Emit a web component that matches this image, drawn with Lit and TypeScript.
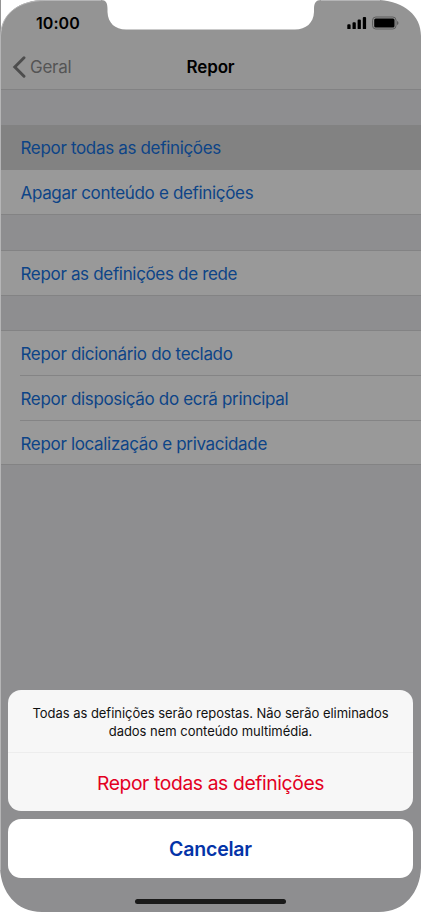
import { LitElement, html, svg, css } from "lit";
import { customElement } from "lit/decorators.js";

@customElement("app-root")
export class AppRoot extends LitElement {
  static styles = css`
    :host {
      display: block;
      font-family: Inter, "Liberation Sans", sans-serif;
      color: #000;
    }
    * { box-sizing: border-box; }
    .screen {
      position: relative;
      width: 421px;
      height: 912px;
      overflow: hidden;
      background: #8e8e90;
      display: flex;
      flex-direction: column;
    }
    .frame {
      position: absolute;
      inset: 0;
      pointer-events: none;
    }
    .top {
      height: 90px;
      background: #949494;
      border-bottom: 1px solid #828283;
    }
    .status {
      height: 45px;
      padding: 0 22px 0 36px;
      display: flex;
      justify-content: space-between;
      align-items: center;
    }
    .time { font-size: 16px; font-weight: 600; letter-spacing: 0.05px; }
    .nav {
      height: 44px;
      padding: 0 12px;
      display: grid;
      grid-template-columns: 1fr auto 1fr;
      align-items: center;
    }
    .back {
      display: flex;
      align-items: center;
      gap: 4px;
      color: #555;
      font-size: 17px;
      letter-spacing: -0.25px;
    }
    .title { font-size: 17px; font-weight: 600; letter-spacing: -0.15px; }
    .list { margin-top: 35px; border-bottom: 1px solid #838384; background: #999; }
    .list.ruled { border-top: 1px solid #838384; }
    .list.last { margin-top: 34px; }
    .row {
      height: 45px;
      padding-left: 20px;
      display: flex;
    }
    .label {
      flex: 1;
      display: flex;
      align-items: center;
      padding-left: 0.5px;
      color: #0d4487;
      font-size: 17px;
      letter-spacing: -0.33px;
    }
    .row.selected { background: #828282; }
    .row.short { height: 44px; padding-top: 1px; }
    .row.end { height: 43px; padding-top: 2px; }
    .line { border-bottom: 1px solid #848485; padding-top: 2px; }
    .sheet {
      margin: auto 8px 0;
      height: 121px;
      border-radius: 13px;
      background: #f7f7f7;
      text-align: center;
    }
    .message {
      height: 63px;
      padding-top: 14px;
      border-bottom: 1px solid #ededed;
      font-size: 13px;
      line-height: 18px;
      letter-spacing: -0.03px;
      color: #111;
    }
    .destructive {
      height: 58px;
      line-height: 60px;
      font-size: 19.3px;
      color: #e3001f;
      letter-spacing: -0.38px;
    }
    .cancel {
      margin: 8px 8px 0;
      height: 58.5px;
      line-height: 60px;
      border-radius: 13px;
      background: #fff;
      text-align: center;
      font-size: 19.5px;
      font-weight: 600;
      color: #0433a8;
      letter-spacing: -0.2px;
    }
    .home {
      margin: 21px auto 8px;
      width: 151px;
      height: 5.5px;
      flex-shrink: 0;
      border-radius: 3px;
      background: #1a1a1a;
    }
  `;

  private row(text: string, kind = "", line = "") {
    return html`<div class="row ${kind}"><div class="label ${line}"><span>${text}</span></div></div>`;
  }

  private frame() {
    return svg`
      <path fill="#fff" d="M0 0H45C20 0 1 13 1 36V0ZM101 0C106 0 107.500 3 107.500 9V12C108 23 115 29.500 126 29.500H295C306 29.500 313.500 23 314 12V9C314 3 316 0 321 0ZM380 0C404 2 421 15 421 36V0ZM0 868C1 892 16 912 42 912H0ZM421 868C420 892 405 912 379 912H421Z"/>
      <path fill="none" stroke="#b5b5b6" d="M.5 870V36C1 13 20 .5 45 .5H101M321 .5H380"/>`;
  }

  render() {
    return html`
      <div class="screen">
        <div class="top">
          <div class="status">
            <span class="time">10:00</span>
            <svg width="52" height="14" viewBox="0 0 52 14">
              <path d="M.3 9.200q0-1 1-1h1.300q1 0 1 1v3.300q0 .5-.5.500H.8q-.5 0-.5-.5ZM5.500 7.200q0-1 1-1h1.300q1 0 1 1v5.300q0 .5-.5.500H6q-.5 0-.5-.5ZM10.600 4.500q0-1 1-1h1.300q1 0 1 1v8q0 .5-.5.500h-2.300q-.5 0-.5-.5ZM15.800 2q0-1 1-1h1.300q1 0 1 1v10.500q0 .5-.5.500h-2.300q-.5 0-.5-.5Z"/>
              <rect x="25.600" y="1" width="23.400" height="12" rx="3.200" fill="none" stroke="#5c5c5c"/>
              <rect x="27.200" y="2.600" width="20.300" height="8.800" rx="1.500"/>
              <path fill="#5c5c5c" d="M50 5q1.500.5 1.500 2t-1.500 2Z"/>
            </svg>
          </div>
          <div class="nav">
            <div class="back">
              <svg width="14" height="22" viewBox="0 0 14 22">
                <path d="M12 1.800 2.800 11 12 20.200" fill="none" stroke="#4d4d4d" stroke-width="2.900" stroke-linecap="round"/>
              </svg>
              <span>Geral</span>
            </div>
            <span class="title">Repor</span>
          </div>
        </div>

        <div class="list">
          ${this.row("Repor todas as definições", "selected")}
          ${this.row("Apagar conteúdo e definições", "short")}
        </div>
        <div class="list ruled">${this.row("Repor as definições de rede", "short")}</div>
        <div class="list ruled last">
          ${this.row("Repor dicionário do teclado", "", "line")}
          ${this.row("Repor disposição do ecrã principal", "", "line")}
          ${this.row("Repor localização e privacidade", "end")}
        </div>

        <div class="sheet">
          <div class="message">
            Todas as definições serão repostas. Não serão eliminados<br />dados nem conteúdo multimédia.
          </div>
          <div class="destructive">Repor todas as definições</div>
        </div>
        <div class="cancel">Cancelar</div>
        <div class="home"></div>
        <svg class="frame" width="421" height="912" viewBox="0 0 421 912">${this.frame()}</svg>
      </div>
    `;
  }
}
